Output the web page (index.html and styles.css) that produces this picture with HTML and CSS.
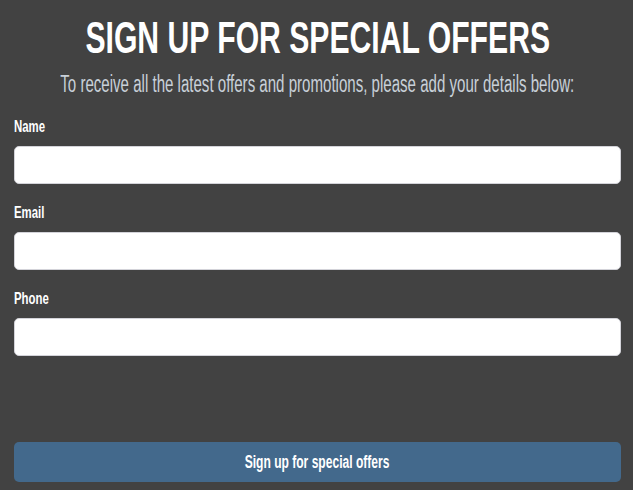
FILE: index.html
```html
<!DOCTYPE html>
<html lang="en">
<head>
<meta charset="utf-8">
<title>Sign up for special offers</title>
<link rel="stylesheet" href="styles.css">
</head>
<body>
<main class="signup">
  <h1 class="title"><span class="narrow">SIGN UP FOR SPECIAL OFFERS</span></h1>
  <p class="intro"><span class="narrow slim">To receive all the latest offers and promotions, please add your details below:</span></p>
  <form class="form">
    <div class="field">
      <label class="label" for="name"><span class="narrow left">Name</span></label>
      <input class="input" id="name" type="text">
    </div>
    <div class="field">
      <label class="label" for="email"><span class="narrow left">Email</span></label>
      <input class="input" id="email" type="email">
    </div>
    <div class="field">
      <label class="label" for="phone"><span class="narrow left">Phone</span></label>
      <input class="input" id="phone" type="tel">
    </div>
    <button class="submit" type="button"><span class="narrow">Sign up for special offers</span></button>
  </form>
</main>
</body>
</html>
```
FILE: styles.css
```css
html, body {
  margin: 0;
  padding: 0;
  background: #424242;
}
body {
  font-family: "Liberation Sans", Arial, sans-serif;
  color: #fff;
}
.narrow {
  display: inline-block;
  white-space: nowrap;
  flex-shrink: 0;
  transform: scaleX(0.67);
  transform-origin: center;
}
.narrow.slim {
  transform: scaleX(0.655);
}
.narrow.left {
  transform-origin: left;
}
.signup {
  padding: 12px 12px 0 14px;
}
.title {
  display: flex;
  justify-content: center;
  overflow: hidden;
  margin: 0;
  font-size: 45px;
  line-height: 52px;
  font-weight: 700;
}
.intro {
  display: flex;
  justify-content: center;
  overflow: hidden;
  margin: 6px 0 0;
  font-size: 23px;
  line-height: 28px;
  color: #c8d0d8;
}
.form {
  display: flex;
  flex-direction: column;
  margin-top: 19px;
}
.field {
  display: flex;
  flex-direction: column;
  margin-bottom: 19px;
}
.label {
  font-size: 17px;
  line-height: 20px;
  font-weight: 700;
  margin-bottom: 9px;
}
.input {
  box-sizing: border-box;
  height: 38px;
  border: 1px solid #d3d3d9;
  border-radius: 5px;
  background: #fff;
  margin: 0;
}
.submit {
  display: flex;
  justify-content: center;
  align-items: center;
  overflow: hidden;
  margin-top: 67px;
  height: 40px;
  padding: 0;
  border: 0;
  border-radius: 5px;
  background: #43698c;
  color: #fff;
  font-family: inherit;
  font-size: 18px;
  line-height: 20px;
  font-weight: 700;
}
```
